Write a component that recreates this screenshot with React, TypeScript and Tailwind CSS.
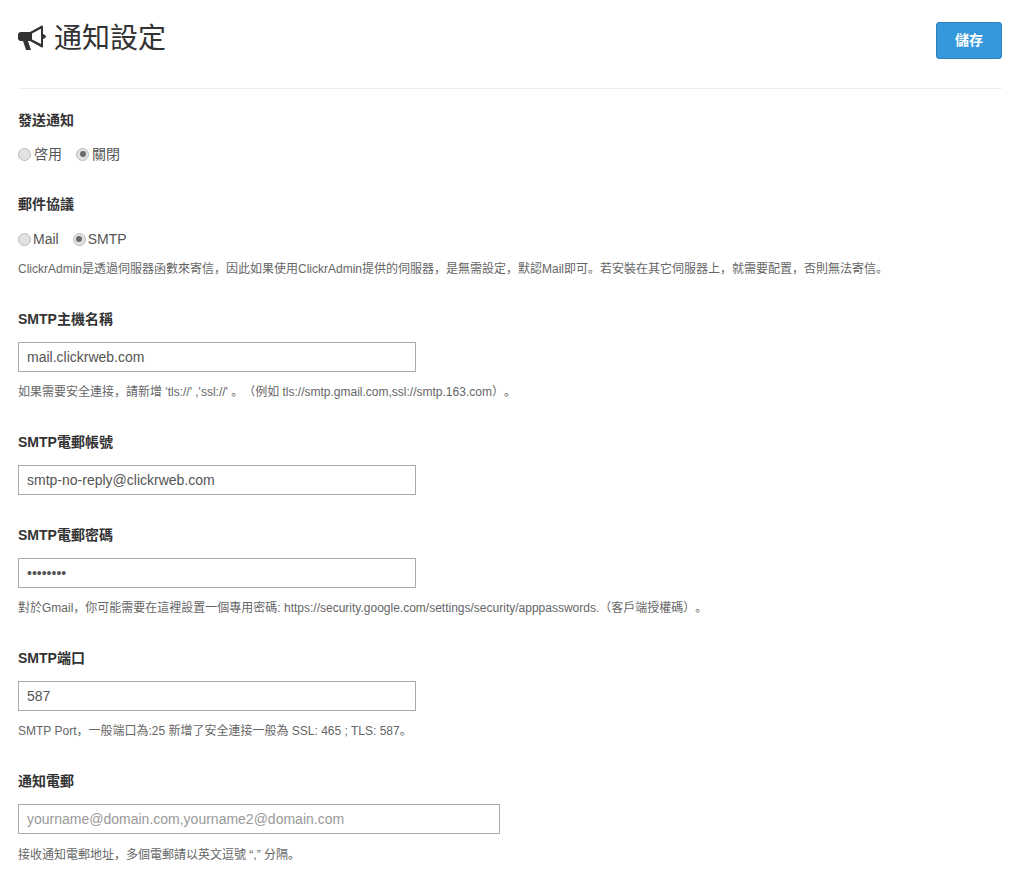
import React from "react";

const Radio = ({ checked, label, latin }: { checked?: boolean; label: string; latin?: boolean }) => (
  <label className={`flex items-center text-[14px] leading-5 text-[#555] ${latin ? "gap-[2px]" : "gap-[3px]"}`}>
    <span className="flex h-[13px] w-[13px] items-center justify-center rounded-full border border-[#bbb] bg-[#e2e2e2]">
      {checked && <span className="h-1.5 w-1.5 rounded-full bg-[#6a6a6a]" />}
    </span>
    {label}
  </label>
);

const Bullhorn = () => (
  <svg viewBox="0 0 28 25" className="-mt-1 h-[25px] w-7 fill-[#333]" fillRule="evenodd">
    <path d="M3 7H12V16H3Q0 16 0 13V10Q0 7 3 7Z" />
    <path d="M5 16L8 25H13L10 16Z" />
    <path d="M12 7L22 1.5Q24 0 25 1V22Q24 23 22 21.5L12 16ZM14 8.5V14.5L23 19V3.8Z" />
    <path d="M25 9Q28 10 28 11.5Q28 13 25 14Z" />
  </svg>
);

const Field = ({
  label,
  value,
  help,
  wide,
  placeholder,
  type = "text",
  className = "",
  helpClassName = "mt-[10px]",
}: {
  label: string;
  value?: string;
  help?: string;
  wide?: boolean;
  placeholder?: string;
  type?: string;
  className?: string;
  helpClassName?: string;
}) => (
  <div className={className}>
    <div className="text-[14px] font-bold leading-5 text-[#333]">{label}</div>
    <input
      type={type}
      defaultValue={value}
      placeholder={placeholder}
      className={`mt-[13px] block h-[30px] border border-[#aaa] bg-white px-2 text-[14px] text-[#555] placeholder:text-[#999] ${
        wide ? "w-[482px]" : "w-[398px]"
      }`}
    />
    {help && <p className={`${helpClassName} text-[12px] leading-5 text-[#666]`}>{help}</p>}
  </div>
);

export default function App() {
  return (
    <div
      lang="zh-CN"
      className="min-h-[881px] bg-white pl-[18px] pr-[14px] font-['Liberation_Sans','Noto_Sans_CJK_SC',sans-serif] [text-spacing-trim:space-all]"
    >
      {/* Page header */}
      <div className="flex h-[89px] items-start justify-between border-b border-[#eee]">
        <h1 className="mt-[18px] flex items-center gap-2 text-[28px] font-normal leading-[42px] text-[#333]">
          <Bullhorn />
          通知設定
        </h1>
        <button className="mt-[22px] h-[37px] w-[66px] rounded-[3px] border border-[#2a80b9] bg-[#3498db] text-[14px] font-bold text-white">
          儲存
        </button>
      </div>

      <div className="mt-[21px] text-[14px] font-bold leading-5 text-[#333]">發送通知</div>
      <div className="mt-[14px] flex gap-[14px]">
        <Radio label="啓用" />
        <Radio checked label="關閉" />
      </div>

      <div className="mt-[30px] text-[14px] font-bold leading-5 text-[#333]">郵件協議</div>
      <div className="mt-[15px] flex gap-[14px]">
        <Radio latin label="Mail" />
        <Radio latin checked label="SMTP" />
      </div>
      <p className="mt-[10px] text-[12px] leading-5 text-[#666]">
        ClickrAdmin是透過伺服器函數來寄信，因此如果使用ClickrAdmin提供的伺服器，是無需設定，默認Mail即可。若安裝在其它伺服器上，就需要配置，否則無法寄信。
      </p>

      <Field
        className="mt-[30px]"
        label="SMTP主機名稱"
        value="mail.clickrweb.com"
        help="如果需要安全連接，請新增 'tls://' ,'ssl://' 。（例如 tls://smtp.gmail.com,ssl://smtp.163.com）。"
      />
      <Field className="mt-[30px]" label="SMTP電郵帳號" value="smtp-no-reply@clickrweb.com" />
      <Field
        className="mt-[30px]"
        label="SMTP電郵密碼"
        type="password"
        value="12345678"
        help="對於Gmail，你可能需要在這裡設置一個專用密碼: https://security.google.com/settings/security/apppasswords.（客戶端授權碼）。"
      />
      <Field
        className="mt-[30px]"
        label="SMTP端口"
        value="587"
        help="SMTP Port，一般端口為:25 新增了安全連接一般為 SSL: 465 ; TLS: 587。"
      />
      <Field
        className="mt-[30px]"
        label="通知電郵"
        wide
        placeholder="yourname@domain.com,yourname2@domain.com"
        helpClassName="mt-[11px]"
        help="接收通知電郵地址，多個電郵請以英文逗號 “,” 分隔。"
      />
    </div>
  );
}
